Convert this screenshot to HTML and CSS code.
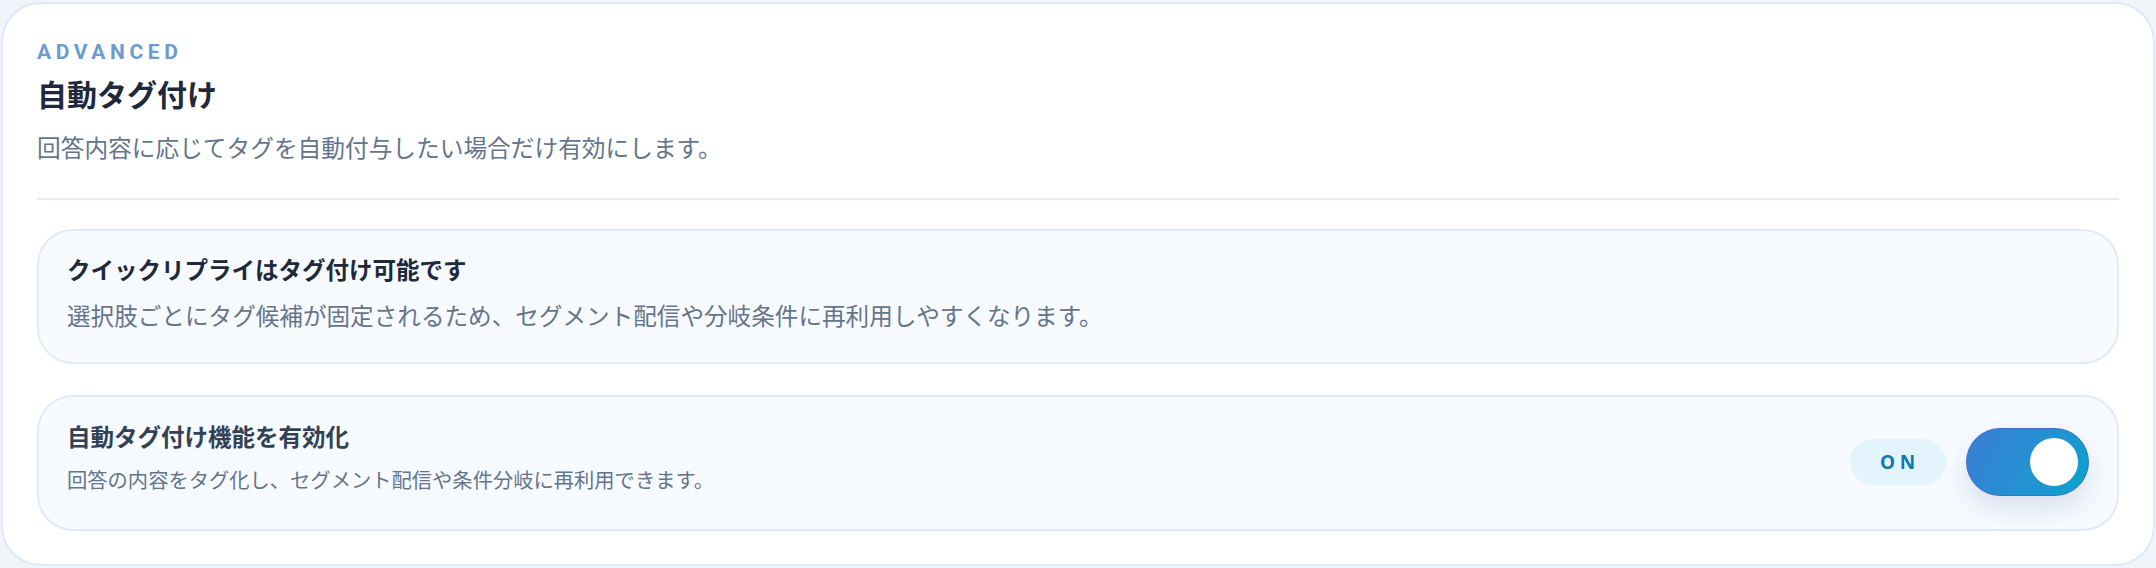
FILE: index.html
```html
<!DOCTYPE html>
<html lang="ja">
<head>
    <meta charset="UTF-8">
    <meta name="viewport" content="width=device-width, initial-scale=1.0">
    <title>自動タグ付け</title>
    <link rel="stylesheet" href="styles.css">
</head>
<body>
<section class="panel">
    <div class="panel-head">
        <div class="eyebrow">ADVANCED</div>
        <h2 class="panel-title">自動タグ付け</h2>
        <p class="panel-desc">回答内容に応じてタグを自動付与したい場合だけ有効にします。</p>
    </div>

    <div class="panel-body">
        <div class="info-card">
            <div class="info-title">クイックリプライはタグ付け可能です</div>
            <div class="info-desc">選択肢ごとにタグ候補が固定されるため、セグメント配信や分岐条件に再利用しやすくなります。</div>
        </div>

        <div class="setting-card">
            <div class="setting-text">
                <div class="setting-title">自動タグ付け機能を有効化</div>
                <div class="setting-desc">回答の内容をタグ化し、セグメント配信や条件分岐に再利用できます。</div>
            </div>
            <div class="setting-controls">
                <span class="state-pill">ON</span>
                <button class="toggle is-on" title="自動タグ付け">
                    <span class="toggle-knob"></span>
                </button>
            </div>
        </div>
    </div>
</section>
</body>
</html>
```

FILE: styles.css
```css
* {
    margin: 0;
    padding: 0;
    box-sizing: border-box;
}

body {
    padding: 2px 1px;
    background-color: #f1f5fa;
    font-family: 'Noto Sans CJK JP', 'Noto Sans', sans-serif;
    color: #1e293b;
}

.panel {
    background-color: #fff;
    border: 2px solid #dde9f6;
    border-radius: 40px;
    padding: 35px 34px 33px;
}

.panel-head {
    padding-bottom: 34px;
    border-bottom: 2px solid #e3edf8;
}

.eyebrow {
    font-family: 'Roboto', 'Liberation Sans', sans-serif;
    font-size: 21px;
    font-weight: 700;
    line-height: 26px;
    letter-spacing: 0.22em;
    color: #6b9bd2;
}

.panel-title {
    margin-top: 8px;
    font-size: 30px;
    font-weight: 700;
    line-height: 40px;
    color: #1e293b;
}

.panel-desc {
    margin-top: 17px;
    font-size: 23.7px;
    line-height: 34px;
    color: #64748b;
}

.panel-body {
    display: flex;
    flex-direction: column;
    gap: 31px;
    padding-top: 29px;
}

.info-card,
.setting-card {
    background-color: #f7faff;
    border: 2px solid #e1ebf7;
    border-radius: 36px;
    padding: 22px 28px 30px;
}

.info-title,
.setting-title {
    font-size: 23.5px;
    font-weight: 700;
    line-height: 32px;
    color: #1e293b;
}

.setting-title {
    color: #334155;
}

.info-desc {
    margin-top: 13px;
    font-size: 23.6px;
    line-height: 34px;
    color: #64748b;
}

.setting-card {
    display: flex;
    align-items: center;
    justify-content: space-between;
    padding-top: 23px;
    padding-bottom: 35px;
}

.setting-desc {
    margin-top: 12px;
    font-size: 20.3px;
    line-height: 30px;
    color: #64748b;
}

.setting-controls {
    display: flex;
    align-items: center;
    gap: 20px;
    margin-top: 5px;
    margin-bottom: -5px;
}

.state-pill {
    width: 96px;
    height: 46px;
    border-radius: 23px;
    background-color: #e4f4fd;
    color: #0b7bb0;
    font-family: 'Noto Sans', 'Liberation Sans', sans-serif;
    font-size: 19px;
    font-weight: 700;
    letter-spacing: 0.25em;
    display: flex;
    align-items: center;
    justify-content: center;
    padding-left: 4px;
}

.toggle {
    width: 123px;
    height: 68px;
    border-radius: 34px;
    border: 1px solid #3d6fc8;
    background: linear-gradient(120deg, #3a7dd2 0%, #2590d2 50%, #0aa3cf 100%);
    box-shadow: 0 12px 26px rgba(30, 70, 130, 0.14);
    display: flex;
    align-items: center;
    justify-content: flex-end;
    padding: 0 10px;
    cursor: pointer;
}

.toggle-knob {
    width: 48px;
    height: 48px;
    border-radius: 50%;
    background-color: #fff;
}
```
